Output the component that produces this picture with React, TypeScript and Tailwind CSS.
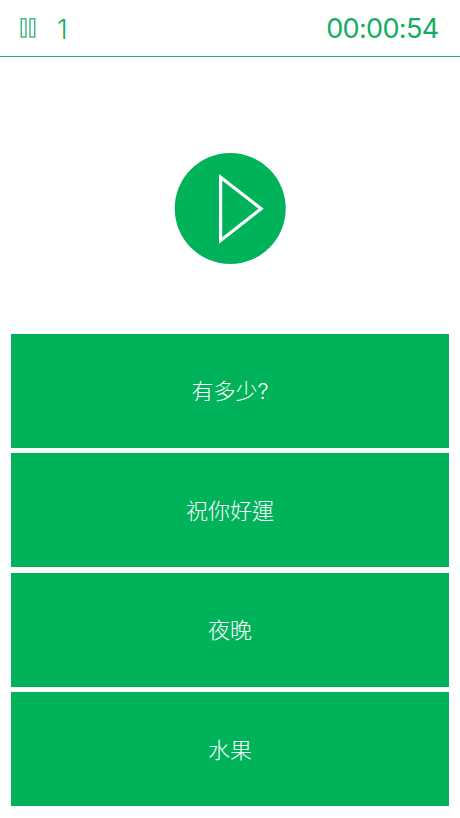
const ANSWERS = ['有多少?', '祝你好運', '夜晚', '水果'];

function PauseIcon() {
  return (
    <svg width="16" height="20" viewBox="0 0 16 20" fill="none" stroke="#12ad61" strokeWidth="1.2">
      <rect x="1.2" y="0.8" width="4.8" height="18.2" />
      <rect x="10" y="0.8" width="4.8" height="18.2" />
    </svg>
  );
}

function PlayIcon() {
  return (
    <svg width="111" height="111" viewBox="0 0 111 111" fill="none" className="overflow-visible">
      <circle cx="55.2" cy="55.5" r="55.5" fill="#00b25a" />
      <path d="M45.6 24.2V87.4L86.1 55.8Z" stroke="#fff" strokeWidth="3.2" />
    </svg>
  );
}

export default function App() {
  return (
    <div className="flex h-[818px] w-[460px] flex-col overflow-hidden bg-white">
      {/* Status bar */}
      <header className="flex h-[57px] shrink-0 items-center border-b border-[#2aab76] pl-5 pr-[21.5px] text-[#12ad61]">
        <button aria-label="Pause">
          <PauseIcon />
        </button>
        <span className="ml-[21px] pt-[2px] font-['Inter',sans-serif] text-[27px] leading-none font-light">1</span>
        <time className="ml-auto font-['Inter',sans-serif] text-[27px] leading-none tracking-[-0.65px]">00:00:54</time>
      </header>

      <div className="flex h-[276.8px] shrink-0 justify-center pt-24">
        <button aria-label="Play" className="h-[111px] w-[111px]">
          <PlayIcon />
        </button>
      </div>

      {/* Answers */}
      <main className="flex flex-col gap-[5.5px] px-[11px]">
        {ANSWERS.map((answer) => (
          <button
            key={answer}
            className="flex h-[114px] items-center justify-center bg-[#00b25a] pt-[1px] font-['Inter','Noto_Sans_CJK_TC',sans-serif] text-[22px] leading-none font-light text-white"
          >
            {answer}
          </button>
        ))}
      </main>
    </div>
  );
}
